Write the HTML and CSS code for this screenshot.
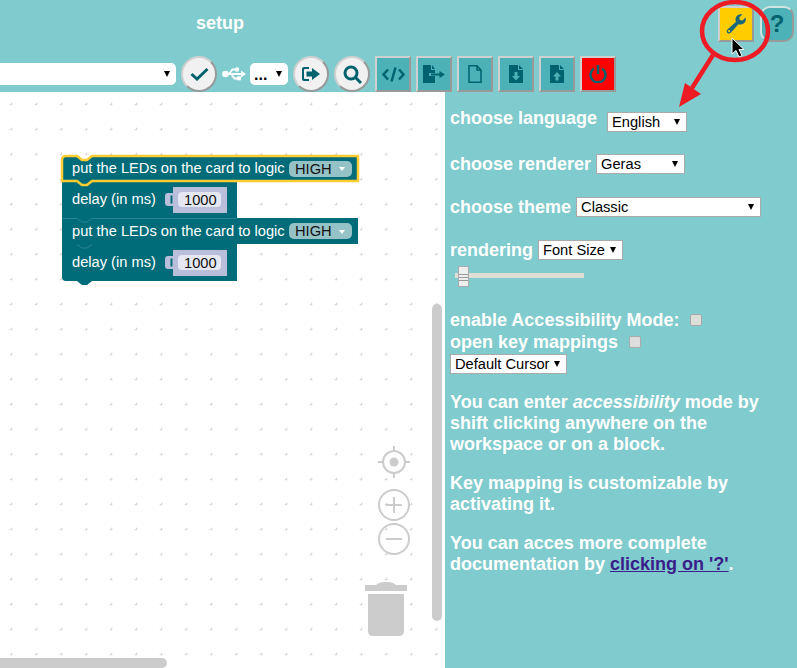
FILE: index.html
```html
<!DOCTYPE html>
<html>
<head>
    <title>setup</title>
    <link rel="stylesheet" href="styles.css">
</head>
<body>
    <div id="container">
        <div class="header">
            <div class="top-row">
                <span class="title">setup</span>
                <button class="btn btn-square btn-yellow">
                    <svg width="20" height="20" viewBox="0 0 20 20"><path class="icon-wrench" fill-rule="evenodd" d="M19.500 3.500 L16.500 6.500 L13.800 6 L13.300 3.300 L16.300 .4 C13 -.3 9.800 1.500 9.500 5 C9.400 6 9.600 6.900 10 7.700 L1.500 15.500 C.3 16.800 .5 18.200 1.500 19 C2.500 19.900 3.800 19.700 5 18.500 L12.500 10.300 C15.800 11.400 19.400 9.400 19.800 6 C19.900 5.100 19.800 4.200 19.500 3.500 Z M3.100 18.200 A1.100 1.100 0 1 1 3.100 16 A1.100 1.100 0 0 1 3.100 18.200 Z"/></svg>
                </button>
                <button class="btn btn-help">?</button>
            </div>
            <div class="toolbar">
                <span class="pick pick-board"><select><option></option></select></span>
                <button class="btn btn-round">
                    <svg width="19" height="14" viewBox="0 0 19 14"><path class="icon-line" d="M1.500 7 L7 12 L17.500 2"/></svg>
                </button>
                <svg class="usb" width="24" height="14" viewBox="0 0 24 14"><path class="usb-line" d="M3 7 H21 M7 7 L10.500 2.500 H14 M9 7 L12.500 11.500 H16"/><circle class="usb-dot" cx="3.500" cy="7" r="3.300"/><circle class="usb-dot" cx="15" cy="2.500" r="2.200"/><rect class="usb-dot" x="15" y="9.300" width="4" height="4"/><path class="usb-dot" d="M19 3.500 L24 7 L19 10.500 Z"/></svg>
                <span class="pick pick-port"><select><option>...</option></select></span>
                <button class="btn btn-round">
                    <svg width="18" height="14" viewBox="0 0 18 14"><path class="icon-fill" d="M7 0 H2 Q0 0 0 2 V12 Q0 14 2 14 H7 V12 H3 Q2 12 2 11 V3 Q2 2 3 2 H7 Z M10 1 L18 7 L10 13 V9.500 H4.500 V4.500 H10 Z"/></svg>
                </button>
                <button class="btn btn-round">
                    <svg width="19" height="19" viewBox="0 0 19 19"><circle class="icon-line" cx="8" cy="8" r="6"/><path class="icon-line" d="M12.500 12.500 L18 18"/></svg>
                </button>
                <button class="btn btn-square">
                    <svg width="23" height="15" viewBox="0 0 23 15"><path class="icon-code" d="M6 2.500 L1.500 7.500 L6 12.500 M17 2.500 L21.500 7.500 L17 12.500 M13.500 .5 L9.500 14.500"/></svg>
                </button>
                <button class="btn btn-square">
                    <svg width="22" height="18" viewBox="0 0 22 18"><path class="icon-fill" d="M0 0 H8 V5 H12 V8 H6 V11 H12 V18 H0 Z M9 0 L12 4 H9 Z M16.500 6 L22 9.500 L16.500 13 V10.500 H8 V8.500 H16.500 Z"/></svg>
                </button>
                <button class="btn btn-square">
                    <svg width="14" height="18" viewBox="0 0 14 18"><path class="icon-thin" d="M1 .8 H9 L13 5 V17.200 H1 Z M9 .8 V5 H13"/></svg>
                </button>
                <button class="btn btn-square">
                    <svg width="14" height="18" viewBox="0 0 14 18"><path class="icon-fill" fill-rule="evenodd" d="M0 0 H9 V5 H14 V18 H0 Z M10 0 L14 4 H10 Z M5.500 7 V11 H3 L7 15.500 L11 11 H8.500 V7 Z"/></svg>
                </button>
                <button class="btn btn-square">
                    <svg width="14" height="18" viewBox="0 0 14 18"><path class="icon-fill" fill-rule="evenodd" d="M0 0 H9 V5 H14 V18 H0 Z M10 0 L14 4 H10 Z M7 7 L3 11.500 H5.500 V15.500 H8.500 V11.500 H11 Z"/></svg>
                </button>
                <button class="btn btn-square btn-red">
                    <svg width="18" height="18" viewBox="0 0 18 18"><path class="icon-power" d="M5 3.500 A7.500 7.500 0 1 0 13 3.500 M9 0 V9"/></svg>
                </button>
            </div>
        </div>

        <div class="main">
            <div class="workspace">
                <svg class="canvas" width="445" height="576" viewBox="0 92 445 576">
                    <defs>
                        <pattern id="dots" x="11" y="104" width="25" height="25" patternUnits="userSpaceOnUse">
                            <path d="M0 0 H1.500 M0 0 V1.500 M23.500 0 H25 M0 23.500 V25 M25 0 V1.500 M0 25 H1.500" class="dot"/>
                        </pattern>
                    </defs>
                    <rect x="0" y="94" width="445" height="574" fill="url(#dots)"/>

                    <!-- blocks -->
                    <path class="block" d="M62 181 H237 V218 H92 V222 H77 V218 H62 Z"/>
                    <path class="block" d="M62 244 H237 V281 H92 L87 285 H82 L77 281 H66 Q62 281 62 277 Z"/>
                    <path class="block" d="M62 218 H358 V244 H62 Z"/>
                    <path class="block-edge" d="M62 218.500 H77 L82 222 H87 L92 218.500 H237"/>
                    <path class="block-edge" d="M77 244.500 L82 248 H87 L92 244.500"/>
                    <path class="block block-selected" d="M66 156 H77 L82 160 H87 L92 156 H358 V181 H92 L87 185 H82 L77 181 H62 V160 Q62 156 66 156 Z"/>

                    <text class="block-text" x="72" y="173">put the LEDs on the card to logic</text>
                    <rect class="dropdown" x="289" y="161" width="63" height="16" rx="5"/>
                    <text class="block-text dark" x="295" y="174">HIGH</text>
                    <path class="dropdown-arrow" d="M339 167 H345 L342 171 Z"/>

                    <text class="block-text" x="72" y="204">delay (in ms)</text>
                    <path class="value" d="M173 187 H227 V213 H173 V206 H168 Q165 206 165 203 V196 Q165 193 168 193 H173 Z"/>
                    <path class="value-gap" d="M171.500 195.500 V203.500"/>
                    <rect class="field" x="178" y="192" width="43" height="15" rx="4"/>
                    <text class="block-text dark" x="184" y="205">1000</text>

                    <text class="block-text" x="72" y="236">put the LEDs on the card to logic</text>
                    <rect class="dropdown" x="289" y="223" width="63" height="16" rx="5"/>
                    <text class="block-text dark" x="295" y="236">HIGH</text>
                    <path class="dropdown-arrow" d="M339 230 H345 L342 234 Z"/>

                    <text class="block-text" x="72" y="267">delay (in ms)</text>
                    <path class="value" d="M173 250 H227 V276 H173 V269 H168 Q165 269 165 266 V259 Q165 256 168 256 H173 Z"/>
                    <path class="value-gap" d="M171.500 258.500 V266.500"/>
                    <rect class="field" x="178" y="255" width="43" height="15" rx="4"/>
                    <text class="block-text dark" x="184" y="268">1000</text>

                    <!-- workspace controls -->
                    <circle class="ctl" cx="394" cy="462" r="11"/>
                    <circle class="ctl-fill" cx="394" cy="462" r="4.500"/>
                    <path class="ctl" d="M394 446 V451 M394 473 V478 M378 462 H383 M405 462 H410"/>
                    <circle class="ctl" cx="394" cy="505" r="15"/>
                    <path class="ctl" d="M386 505 H402 M394 497 V513"/>
                    <circle class="ctl" cx="394" cy="539" r="15"/>
                    <path class="ctl" d="M386 539 H402"/>
                    <path class="ctl-fill" d="M365 585 H376 Q379 582 384 582 H388 Q393 582 396 585 H407 V591 H365 Z M368 594 H404 V631 Q404 636 399 636 H373 Q368 636 368 631 Z"/>
                </svg>
                <div class="scroll-v"></div>
                <div class="scroll-h"></div>
            </div>

            <div class="panel">
                <div class="row row-language"><span class="label-up">choose language</span> <span class="pick pick-language"><select><option>English</option></select></span></div>
                <div class="row"><span>choose renderer</span> <span class="pick pick-renderer"><select><option>Geras</option></select></span></div>
                <div class="row"><span>choose theme</span> <span class="pick pick-theme"><select><option>Classic</option></select></span></div>
                <div class="row"><span>rendering</span> <span class="pick pick-rendering"><select><option>Font Size</option></select></span></div>
                <div class="slider"><div class="thumb"></div></div>
                <div class="row-check row-access">enable Accessibility Mode: <span class="check"></span></div>
                <div class="row-check">open key mappings <span class="check"></span></div>
                <span class="pick pick-cursor"><select><option>Default Cursor</option></select></span>
                <p>You can enter <em>accessibility</em> mode by shift clicking anywhere on the workspace or on a block.</p>
                <p>Key mapping is customizable by activating it.</p>
                <p>You can acces more complete documentation by <a href="#">clicking on '?'</a>.</p>
            </div>
        </div>

        <!-- red annotation drawn on top of the screenshot -->
        <svg class="annotation" width="797" height="668" viewBox="0 0 797 668">
            <ellipse class="mark" cx="735" cy="31" rx="33" ry="29"/>
            <path class="mark" d="M713 55 L692 88"/>
            <path class="mark-head" d="M679 107 L685 83 L701 94 Z"/>
            <path class="cursor" d="M732 38 V54 L736 50.500 L739 57 L742 55.500 L739 49.500 L744 49.500 Z"/>
        </svg>
    </div>
</body>
</html>
```

FILE: styles.css
```css
:root {
    --bg-color: #80cbcd;
    --btn-color: #4db1b8;
    --icon-color: #00626f;
    --block-color: #006c79;
}

html, body {
    margin: 0;
    height: 100%;
    overflow: hidden;
}

body {
    background-color: var(--bg-color);
    font-family: "Liberation Sans", Arial, sans-serif;
    color: white;
}

#container {
    position: relative;
    width: 797px;
    height: 668px;
    overflow: hidden;
}

.header {
    height: 92px;
    display: flex;
    flex-direction: column;
}

.top-row {
    height: 50px;
    padding: 6px 3px 0 0;
    display: flex;
    align-items: flex-start;
}

.title {
    margin-left: 196px;
    margin-right: auto;
    margin-top: 7px;
    font-size: 18px;
    font-weight: bold;
}

.toolbar {
    display: flex;
    align-items: center;
    gap: 5px;
}

.btn {
    width: 36px;
    height: 36px;
    padding: 0;
    box-sizing: border-box;
    display: flex;
    align-items: center;
    justify-content: center;
    border: 2px solid #d0d0d0;
    border-right-color: #999;
    border-bottom-color: #999;
    background-color: var(--btn-color);
}

.btn-round {
    border-radius: 50%;
    background-color: #f1f1f1;
}

.btn-yellow {
    background-color: #fc0;
    margin-right: 6px;
}

.btn-red {
    background-color: #f00;
}

.btn-help {
    width: 34px;
    border-radius: 10px;
    border-color: #d0e4e4 #999 #999 #d0e4e4;
    font: bold 24px "Liberation Sans", Arial, sans-serif;
    color: var(--icon-color);
}

.usb {
    margin-right: -1px;
}

.usb-line {
    fill: none;
    stroke: white;
    stroke-width: 1.8;
}

.usb-dot {
    fill: white;
}

.icon-fill {
    fill: var(--icon-color);
}

.icon-wrench {
    fill: #17697a;
}

.icon-line, .icon-code, .icon-thin, .icon-power {
    fill: none;
    stroke: var(--icon-color);
}

.icon-line {
    stroke-width: 3;
}

.icon-code {
    stroke-width: 2.5;
}

.icon-thin {
    stroke-width: 1.5;
}

.icon-power {
    stroke-width: 2.5;
}

/* selects */
.pick {
    position: relative;
    display: inline-block;
    vertical-align: middle;
    height: 20px;
}

.pick select {
    appearance: none;
    display: block;
    width: 100%;
    height: 20px;
    box-sizing: border-box;
    padding: 0 0 0 4px;
    border: 1px solid #aaa;
    border-radius: 0;
    background-color: white;
    font: 14.67px "Liberation Sans", Arial, sans-serif;
    color: black;
}

.pick::after {
    content: "";
    position: absolute;
    right: 7px;
    top: 7px;
    border-style: solid;
    border-width: 6px 3.5px 0;
    border-color: black transparent transparent;
}

.pick-board {
    width: 176px;
    height: 22px;
}

.pick-board select {
    height: 22px;
    border: none;
    border-radius: 0 5px 5px 0;
}

.pick-port {
    width: 38px;
    height: 22px;
}

.pick-port select {
    height: 22px;
    border: none;
    border-radius: 5px;
    font-size: 16px;
    font-weight: bold;
}

.pick-board::after, .pick-port::after {
    right: 6px;
    top: 8px;
}

.pick-language {
    width: 80px;
    margin-left: 5px;
}

.pick-renderer {
    width: 89px;
}

.pick-theme {
    width: 185px;
}

.pick-rendering {
    width: 85px;
}

.pick-cursor {
    display: block;
    width: 117px;
}

/* workspace */
.main {
    height: 576px;
    display: flex;
}

.workspace {
    position: relative;
    width: 445px;
    background-color: white;
}

.canvas {
    display: block;
}

.dot {
    fill: none;
    stroke: #ccc;
    stroke-width: 1;
}

.block {
    fill: var(--block-color);
}

.block-selected {
    stroke: #fc3;
    stroke-width: 2.5;
}

.block-edge {
    fill: none;
    stroke: #2b8591;
    stroke-width: 1;
}

.block-text {
    font-family: "Liberation Sans", Arial, sans-serif;
    font-size: 14.67px;
    fill: white;
}

.block-text.dark {
    fill: #111;
}

.dropdown {
    fill: #94c2c7;
}

.dropdown-arrow {
    fill: white;
}

.value {
    fill: #b9bedb;
}

.value-gap {
    fill: none;
    stroke: var(--block-color);
    stroke-width: 2;
}

.field {
    fill: #e5e7f2;
}

.ctl {
    fill: none;
    stroke: #ccc;
    stroke-width: 2;
}

.ctl-fill {
    fill: #ccc;
}

.scroll-v {
    position: absolute;
    left: 432px;
    top: 212px;
    width: 10px;
    height: 317px;
    border-radius: 5px;
    background-color: #ccc;
}

.scroll-h {
    position: absolute;
    left: 0;
    bottom: 0;
    width: 167px;
    height: 10px;
    border-radius: 0 5px 5px 0;
    background-color: #ccc;
}

/* settings panel */
.panel {
    flex: 1;
    padding: 20px 30px 0 5px;
    font-size: 18px;
    font-weight: bold;
}

.row {
    height: 20px;
    margin-bottom: 23px;
    display: flex;
    align-items: center;
    gap: 5px;
}

.row-language {
    margin-bottom: 22px;
}

.label-up {
    margin-bottom: 8px;
}

.row-check {
    height: 22px;
}

.row-access {
    margin-top: 32px;
}

.slider {
    position: relative;
    width: 129px;
    height: 5px;
    margin: -10px 0 0 5px;
    background-color: #e0ddd6;
}

.thumb {
    position: absolute;
    left: 3px;
    top: -7px;
    width: 11px;
    height: 21px;
    box-sizing: border-box;
    border: 1px solid #aaa;
    background: linear-gradient(#eee 0 7px, #999 7px 8px, #eee 8px 10px, #999 10px 11px, #eee 11px 13px, #999 13px 14px, #eee 14px);
}

.check {
    display: inline-block;
    width: 12px;
    height: 12px;
    margin-left: 6px;
    box-sizing: border-box;
    border: 1px solid #aaa;
    border-radius: 2px;
    background-color: #ddd;
}

p {
    margin: 18px 0 0;
    line-height: 21px;
}

a {
    color: #3a1d8a;
}

/* annotation */
.annotation {
    position: absolute;
    left: 0;
    top: 0;
    pointer-events: none;
}

.mark {
    fill: none;
    stroke: #ed1c24;
    stroke-width: 4.500;
}

.mark-head {
    fill: #ed1c24;
}

.cursor {
    fill: black;
    stroke: white;
    stroke-width: 1;
}
```
